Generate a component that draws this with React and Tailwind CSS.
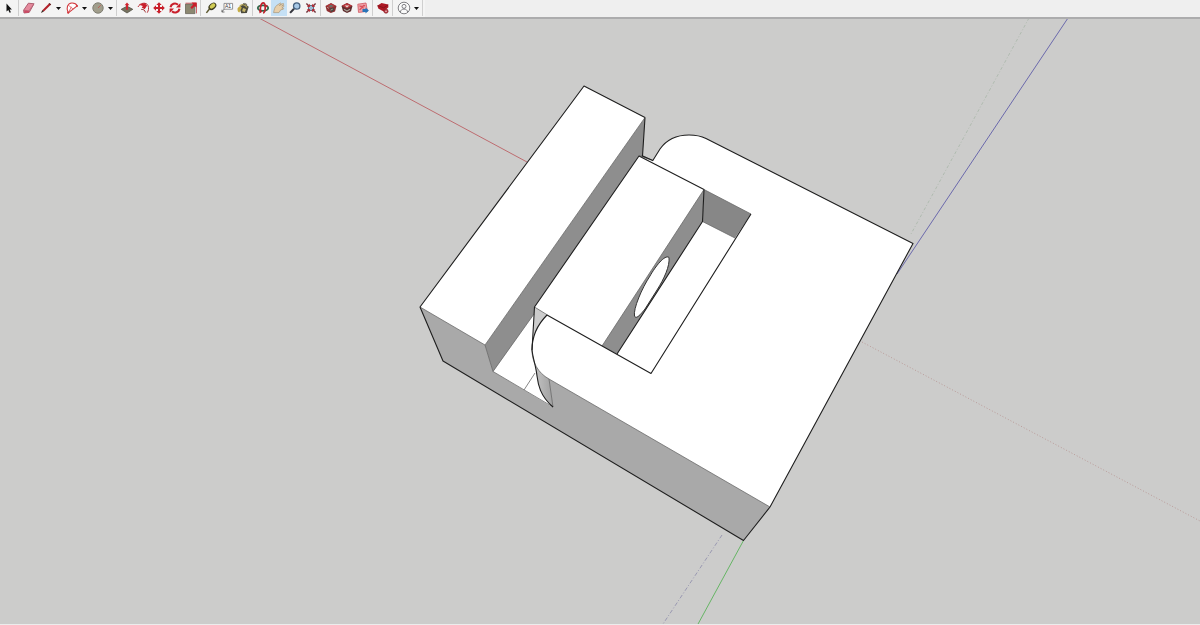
const Icon = ({ children }) => (
  <svg viewBox="0 0 16 16" className="block h-4 w-4" aria-hidden="true">
    {children}
  </svg>
);

const icons = {
  select: (
    <path d="M5.5 3.5v8l1.8-1.6 1.3 2.9 1.3-.6-1.3-2.8h2.3z" fill="#111" />
  ),
  eraser: (
    <>
      <path d="M2.6 10.2 7.4 3.2l5.6.6-4.8 8.6-5.2.6z" fill="#e58a9d" stroke="#a65466" strokeWidth=".9" />
      <path d="M2.8 10.2l5.2.6L13 3.8" fill="none" stroke="#b96677" strokeWidth=".8" />
      <path d="M3 10.4l5 .6-.2 1.4-4.3.5z" fill="#cc4a64" />
    </>
  ),
  pencil: (
    <>
      <path d="M4.3 10.2 11 3.4l1.8 1.4-6.9 6.8z" fill="#b3202a" />
      <path d="M3 13l1.3-2.9 1.6 1.5z" fill="#3b2a22" />
      <path d="M11 3.4l1.8 1.4" stroke="#5c1a1a" strokeWidth="1.2" />
    </>
  ),
  arc: (
    <>
      <path d="M4.2 13C1.7 8 3.6 3.4 7.8 3c2.6-.1 4.6 1 5.4 2.9z" fill="#fff" stroke="#d33a3f" strokeWidth="1.1" />
      <path d="M4.2 13l3.2-6.2M4.4 5.2l4.8 4" stroke="#d9595e" strokeWidth=".8" />
      <circle cx="4.2" cy="12.6" r="1.1" fill="#d33a3f" />
      <circle cx="12.9" cy="6" r="1.1" fill="#d33a3f" />
    </>
  ),
  circle: (
    <>
      <circle cx="8" cy="8" r="5.2" fill="#a19e8c" stroke="#807f74" />
      <path d="M8 8l2.7-2.8" stroke="#c3544d" strokeWidth=".8" />
    </>
  ),
  pushPull: (
    <>
      <path d="M2.2 9.3 8 6.2l5.8 3.1L8 13z" fill="#76725f" stroke="#49473c" strokeWidth=".7" />
      <path d="M8 2.4l2.4 2.8H9v4.5H7V5.2H5.6z" fill="#cf2630" />
    </>
  ),
  followMe: (
    <>
      <path d="M3 7c2-4.5 8.5-5 10-1.5 1 2.8.6 5-.8 7.2" fill="none" stroke="#b8323a" strokeWidth="1" />
      <path d="M4 4.7l5.5-1.6 2.6 2.4-2.4 3.7-3-1.8 1.2-1.5z" fill="#c91f2b" />
      <path d="M6.2 9.4c2.7-.2 3.8 1 4.2 3" fill="none" stroke="#a13a3b" strokeWidth="1" />
    </>
  ),
  move: (
    <path
      d="M8 2.2 10.7 5H9v2h2V5.3L13.8 8 11 10.7V9H9v2h1.7L8 13.8 5.3 11H7V9H5v1.7L2.2 8 5 5.3V7h2V5H5.3z"
      fill="#c91f2b"
    />
  ),
  rotate: (
    <>
      <path d="M3.5 7.2A4.5 4.5 0 0 1 11 4.7" fill="none" stroke="#c91f2b" strokeWidth="2.1" />
      <path d="M12.5 8.8A4.5 4.5 0 0 1 5 11.3" fill="none" stroke="#c91f2b" strokeWidth="2.1" />
      <path d="M13.4 3v4.4H9zM2.6 13V8.6H7z" fill="#c91f2b" />
    </>
  ),
  scale: (
    <>
      <path d="M2.5 4h9.4v9.6H2.5z" fill="#8c8871" stroke="#69665a" strokeWidth=".8" />
      <path d="M2.5 3.2h11v10.2" fill="none" stroke="#c4454b" strokeWidth=".8" />
      <path d="M8.6 2.5h5v5l-1.7-1.3-3 2.7-1.5-1.5 2.8-3z" fill="#c91f2b" />
    </>
  ),
  tape: (
    <>
      <ellipse cx="9.4" cy="6.3" rx="4.4" ry="3.1" transform="rotate(-40 9.4 6.3)" fill="#3d3b20" />
      <ellipse cx="9.5" cy="6" rx="3.1" ry="2" transform="rotate(-40 9.5 6)" fill="#d2cd55" />
      <path d="M6.6 8.7l-3.2 4.2" stroke="#5d5930" strokeWidth="1.5" />
    </>
  ),
  text: (
    <>
      <path d="M5 3.4h8.6v5.8H5z" fill="#fff" stroke="#78787b" strokeWidth=".8" />
      <path d="M5 9.2l-2 2.7v-2.2M2.8 12h2.7" stroke="#555" strokeWidth=".8" fill="none" />
      <text x="6" y="8" fill="#333" className="font-['Liberation_Sans'] text-[5px]">A1</text>
    </>
  ),
  paint: (
    <>
      <path d="M4.4 7.6 8.8 3l4.9 3.8-1.9 6.2-5.6.2z" fill="#4b4a3d" />
      <path d="M4.7 6.4C6.5 4 9.5 4 12.2 7.4" fill="none" stroke="#b3a455" strokeWidth="1.2" />
      <path d="M2.6 8.6c1-2.6 3.4-2.6 4.2-1L4.4 12.6C2.8 12.4 2.2 10.2 2.6 8.6z" fill="#c4ab42" />
      <path d="M8 8l3 1.1-1.1 2.8-2.8-.7z" fill="#c7b76b" />
      <path d="M9.5 3.3l2.5 1.4" stroke="#807b68" strokeWidth="1.2" />
    </>
  ),
  orbit: (
    <>
      <ellipse cx="8" cy="8.1" rx="5.2" ry="2.8" fill="none" stroke="#2d6649" strokeWidth="1.8" />
      <path d="M5.8 12.4C4.5 8.3 6 2.8 8.2 2.8c1.3 0 2 2.5 2 5 0 3-.9 4.9-2 5.3" fill="none" stroke="#c0222d" strokeWidth="1.7" />
      <path d="M4 9.8l3.2 1.4-2.6 2.2zM12.8 5.2l-3-.6 1.6 3z" fill="#c0222d" />
    </>
  ),
  pan: (
    <path
      d="M2.6 12.6c.6-3 1.2-6 3.2-7.2l3.4-2.2c.8-.3 1.3.5.7 1l-1.6 1.4 3.4-2c.9-.4 1.4.5.8 1l-1.8 1.5 1.6-.6c.8-.2 1 .7.4 1.1L10.9 8l1.2.2c.7.2.6 1-.1 1.1l-2.2.5-1.9 2.8z"
      fill="#e8cfaa"
      stroke="#a79579"
      strokeWidth=".7"
    />
  ),
  zoom: (
    <>
      <path d="M7 8.7l-3.9 4.2" stroke="#34353d" strokeWidth="2" />
      <circle cx="9.7" cy="6" r="3.2" fill="#a7c8e6" stroke="#46617f" strokeWidth="1.3" />
    </>
  ),
  extents: (
    <>
      <circle cx="8" cy="8" r="2.7" fill="#9ebad3" stroke="#53606f" strokeWidth=".9" />
      <path d="M3.4 3.4l3 3M12.6 3.4l-3 3M3.4 12.6l3-3M12.6 12.6l-3-3" stroke="#71343c" strokeWidth="1.4" />
      <path d="M6.8 6.8V3.8L3.8 6.8zM9.2 6.8V3.8l3 3zM6.8 9.2v3l-3-3zM9.2 9.2v3l3-3z" fill="#bd222e" />
    </>
  ),
  warehouse: (
    <>
      <path d="M2.5 6 8 3l5.5 3L12 11.5 7.8 13l-4-1.9z" fill="#8f3033" />
      <path d="M3.3 5.8 8 3.4l4.6 2.4L8 8.4z" fill="#b3373b" />
      <path d="M5.4 6.2 8 4.7l2.6 1.3L8 7.5z" fill="#69706a" />
      <path d="M6.4 8.4l4-1 1 2.6-3.2 2.2z" fill="#484842" />
      <path d="M4 7.2l2 1.2M7.5 10.2l2.3-1.1" stroke="#c6aaa0" strokeWidth=".8" />
    </>
  ),
  share: (
    <>
      <path d="M2.5 6 8 3l5.5 3L12 11.2 8 13l-4-1.9z" fill="#5f2d2e" />
      <path d="M2.7 5.7 8 3l5.3 2.8L8 8.5z" fill="#b5363c" />
      <path d="M5.7 5.4h4.6L8 7.4z" fill="#eaded8" />
      <path d="M5 9.3 8 11l3-1.7" fill="none" stroke="#aaa098" strokeWidth="1.1" />
    </>
  ),
  layout: (
    <>
      <path d="M2.8 4.2 11 3l1.4 8.4-8.9 1z" fill="#f0a5aa" stroke="#d0565f" strokeWidth=".8" />
      <path d="M4.5 5.8l4.2 2.4M4.6 10l4.7-5.1M5 6.4l5.2-.8" stroke="#d9525c" strokeWidth="1.2" />
      <path d="M7.5 9h3V7.5l3.4 3-3.4 3V12h-3z" fill="#2874b8" />
    </>
  ),
  extension: (
    <>
      <path d="M2.3 5.8 6.5 3l6.7 1.6.2 2.6-4.6 4.2-5.3-2.7z" fill="#ad1824" />
      <path d="M2.6 5.6l6 2.2 4.6-3" fill="none" stroke="#7b1018" strokeWidth=".8" />
      <circle cx="11" cy="11.2" r="2.1" fill="#be3540" stroke="#792027" strokeWidth=".6" />
      <circle cx="11" cy="11.2" r=".8" fill="#e5d8d8" />
    </>
  ),
  user: (
    <>
      <circle cx="8" cy="8" r="5.8" fill="#fafafa" stroke="#626267" strokeWidth=".8" />
      <circle cx="8" cy="6.4" r="2" fill="none" stroke="#626267" strokeWidth=".8" />
      <path d="M4.4 12c.3-2 1.6-2.9 3.6-2.9s3.3.9 3.6 2.9" fill="none" stroke="#626267" strokeWidth=".8" />
    </>
  ),
};

const toolGroups = [
  [{ icon: 'select', label: 'Select' }],
  [
    { icon: 'eraser', label: 'Eraser' },
    { icon: 'pencil', label: 'Line', menu: true },
    { icon: 'arc', label: 'Arc', menu: true },
    { icon: 'circle', label: 'Circle', menu: true },
  ],
  [
    { icon: 'pushPull', label: 'Push/Pull' },
    { icon: 'followMe', label: 'Follow Me' },
    { icon: 'move', label: 'Move' },
    { icon: 'rotate', label: 'Rotate' },
    { icon: 'scale', label: 'Scale' },
  ],
  [
    { icon: 'tape', label: 'Tape Measure' },
    { icon: 'text', label: 'Text' },
    { icon: 'paint', label: 'Paint Bucket' },
  ],
  [
    { icon: 'orbit', label: 'Orbit' },
    { icon: 'pan', label: 'Pan', active: true },
    { icon: 'zoom', label: 'Zoom' },
    { icon: 'extents', label: 'Zoom Extents' },
  ],
  [
    { icon: 'warehouse', label: '3D Warehouse' },
    { icon: 'share', label: 'Share Model' },
    { icon: 'layout', label: 'Send to LayOut' },
  ],
  [{ icon: 'extension', label: 'Extension Warehouse' }],
  [{ icon: 'user', label: 'Account', menu: true }],
];

const Tool = ({ tool }) => (
  <div className={tool.menu ? 'ml-px flex' : 'flex'}>
    <button
      type="button"
      aria-label={tool.label}
      aria-pressed={!!tool.active}
      className={tool.active ? 'bg-[#c5e0f5]' : 'hover:bg-[#dcebf7]'}
    >
      <Icon>{icons[tool.icon]}</Icon>
    </button>
    {tool.menu && (
      <button type="button" aria-label={`${tool.label} options`} className="flex w-[9px] items-center justify-center">
        <svg viewBox="0 0 5 3" className="h-[3px] w-[5px]" aria-hidden="true">
          <path d="M0 0h5L2.5 3z" fill="#111" />
        </svg>
      </button>
    )}
  </div>
);

const Toolbar = () => (
  <header className="flex h-[19px] shrink-0 border-b-2 border-[#acacad] bg-[#efefef]">
    <div role="toolbar" aria-label="Drawing tools" className="flex items-start bg-[#f4f4f4] pl-px">
      {toolGroups.map((group) => (
        <div key={group[0].icon} className="flex items-center">
          {group.map((tool) => (
            <Tool key={tool.icon} tool={tool} />
          ))}
          <span className="mr-0.5 ml-px h-4 w-px bg-[#cfcfcf]" />
        </div>
      ))}
    </div>
  </header>
);

const Viewport = () => (
  <svg
    viewBox="0 19 1200 605"
    preserveAspectRatio="xMidYMid slice"
    className="min-h-0 w-full flex-1"
    role="img"
    aria-label="3D model"
  >
    <defs>
      <linearGradient id="hole" x1="0" y1="0" x2="1" y2="1">
        <stop offset="0" stopColor="#e4e4e4" />
        <stop offset=".3" stopColor="#fff" />
        <stop offset=".8" stopColor="#fff" />
        <stop offset="1" stopColor="#ddd" />
      </linearGradient>
      <linearGradient id="fillet" x1="0" y1="0" x2="1" y2="0">
        <stop offset="0" stopColor="#c8c8c8" />
        <stop offset="1" stopColor="#a0a0a0" />
      </linearGradient>
    </defs>

    {/* axes */}
    <g fill="none" strokeWidth="1">
      <path d="M259 18 527 162" stroke="#bd6c70" />
      <path d="M1068 18 897 274" stroke="#6b69ac" />
      <path d="M743.5 540.5 697.5 625" stroke="#66b565" />
      <path d="M1029 18 911 234" stroke="#a4b3a4" strokeWidth=".7" strokeDasharray="3 2 1 2" />
      <path d="M862 342 1200 521" stroke="#b58f8d" strokeWidth=".8" strokeDasharray="1 2" />
      <path d="M722 535 663 624" stroke="#8d8cab" strokeWidth=".8" strokeDasharray="4 2 1 2" />
    </g>

    {/* faces */}
    <path d="M420 307 485 345 493 371.5 553 407 549 379 770 507 743.5 540.5 443 361z" fill="#a9a9a9" />
    <path d="M493 371.5 534 313 545 380 552 407z" fill="#fff" />
    <path d="M645 117.5 642.5 156 639 156 534 309 534 314 493 371.5 485 345z" fill="#8e8e8e" />
    <path d="M584 86 645 117.5 485 345 420 307z" fill="#fff" />
    <path d="M642 155 653 160.5 651 162 639 156z" fill="#737373" />
    <path
      d="M639 156 652.5 161 660 149C667 139 677 135 689 135 696 135 701 136 706 138.5L913 243.5 770 507 549 379C538 373 532 362 532 350 532 335 538 324 547 315L534.5 307z"
      fill="#fff"
    />
    <path d="M534.5 307 547 315C540 322 536 329 533 340z" fill="#ccc" />
    <path d="M532 350C532 362 538 373 549 379L553 407C540 396 538 384 537 376 536 366 533 359 532 350z" fill="url(#fillet)" />
    <path d="M704 189.5 751 214 735 238 702.5 221.5z" fill="#878787" />
    <path d="M704 189.5 702.5 221.5 617 354 602 346z" fill="#8e8e8e" />
    <path
      d="M669 257.5C665 254 655 267 650 276 642 288 633 309 634.5 316 636 320 641 314 645 309L657 290C664 279 670 266 669 257.5z"
      fill="url(#hole)"
      stroke="#333"
    />

    {/* soft edges */}
    <g fill="none" stroke="#686868" strokeWidth=".8">
      <path d="M420 307 485 345 645 117.5M485 345l8 26.5 60 35.5M493 371.5 534 314" />
      <path d="M532 350C532 362 538 373 549 379L770 507M549 379l4 28M524 390l11-17M534.5 307l13 8" />
      <path d="M704 189.5 751 214M702.5 221.5 735 238M704 189.5 602 346" />
    </g>

    {/* profile edges */}
    <g fill="none" stroke="#1e1e1e" strokeWidth="1.1" strokeLinejoin="round">
      <path d="M645 117.5 584 86 420 307l23 54 300.5 179.5L770 507 913 243.5 706 138.5C701 136 696 135 689 135 677 135 667 139 660 149L652.5 161" />
      <path d="M645 117.5 642.5 156 653 160.5" />
      <path d="M704 189.5 639 156 534.5 307 532 350C533 359 536 366 537 376 538 384 540 396 553 407" />
      <path d="M532 350C532 335 538 324 547 315L651 373.5 751 214" />
      <path d="M704 189.5 702.5 221.5 617 354" />
    </g>
  </svg>
);

const App = () => (
  <div className="flex h-screen flex-col border-b border-[#ececec] bg-[#cccccb]">
    <Toolbar />
    <Viewport />
  </div>
);

export default App;
